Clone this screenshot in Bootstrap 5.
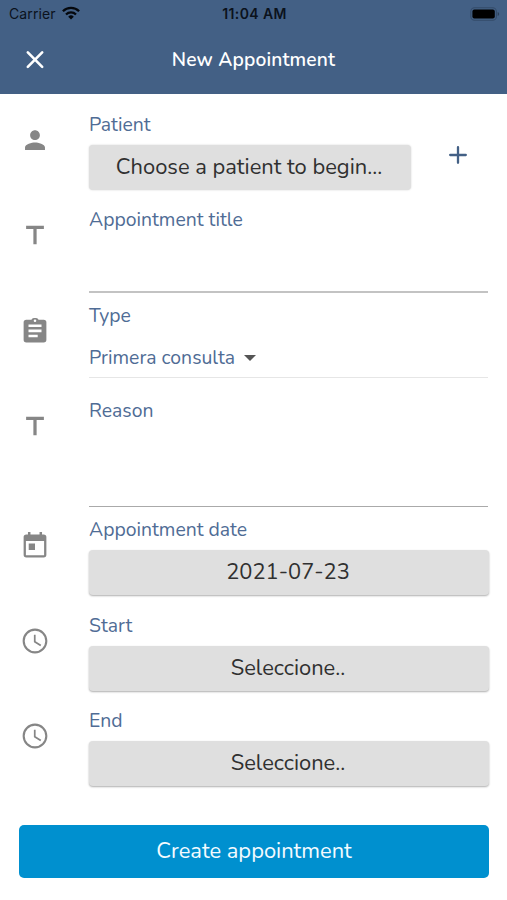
<!DOCTYPE html>
<html lang="en">
<head>
<meta charset="utf-8">
<meta name="viewport" content="width=device-width, initial-scale=1">
<title>New Appointment</title>
<link href="https://cdn.jsdelivr.net/npm/bootstrap@5.3.0/dist/css/bootstrap.min.css" rel="stylesheet">
<style>
body{font-family:Nunito,Lato,"Noto Sans",sans-serif;color:#333;background:#fff;width:507px;height:900px;overflow:hidden}
svg{display:block;flex:none}
.app-top{background:#436085;height:94px}
.status{height:28px;font:14px/28px Inter,"Liberation Sans",sans-serif;letter-spacing:.1px;color:#0b121c;padding:0 7px 0 9px}
.status .clock{font-weight:600;font-size:14px;letter-spacing:.4px}
.status>*{flex:1 1 0}
.wifi{margin:-2px 0 0 6px}
.title-bar{height:64px;padding:0 25px}
.title-bar h1{font-size:19.2px;font-weight:600;letter-spacing:.15px;color:#fff;line-height:24px;padding-right:20px}
.form-area{padding:14px 18px 0 22px}
.field{height:95.4px}
.field.tall{height:119.3px}
.glyph{width:67px;padding-top:19px;color:#868686}
.caption{font-size:19.4px;line-height:33px;height:37px;color:#4f6c95;margin:0}
.pick{background:#dfdfdf;color:#303030;font-size:21.9px;line-height:43.4px;height:45px;padding:0 2px 0 0;border:0;border-radius:4px;box-shadow:0 1px 2px rgba(0,0,0,.32)}
.pick.flat{width:322px;box-shadow:0 0 2px rgba(0,0,0,.18)}
.pick:hover{background:#dfdfdf}
.plus{color:#436085;margin:1px 22px 0 0}
.rule{width:399px;border:0;border-bottom:2px solid #c3c3c3;border-radius:0;padding:0;height:52.5px;background:none}
.rule.area{height:76px;border-bottom:1.5px solid #aaa;resize:none}
.choice{width:399px;height:42px;border-bottom:1px solid #e6e6e6;font-size:19.4px;line-height:38px;padding-top:3px;color:#4f6c95}
.arrow{border:6px solid transparent;border-top-color:#555;border-bottom:0;margin-left:9px}
.create{background:#0090cf;color:#f4fbff;font-size:21.9px;height:53px;line-height:51px;padding:0;border:0;border-radius:5px;margin:25px 18px 0 19px;width:470px}
</style>
</head>
<body>
<svg width="0" height="0" class="position-absolute">
<symbol id="t" viewBox="0 0 24 24"><path d="M3.800 3.500v3h6.700v14h3v-14h6.700v-3z"/></symbol>
<symbol id="clock" viewBox="0 0 24 24"><path d="M11.99 2C6.47 2 2 6.48 2 12s4.47 10 9.99 10C17.52 22 22 17.52 22 12S17.52 2 11.99 2zM12 20.300a8.300 8.300 0 1 1 0-16.600 8.300 8.300 0 0 1 0 16.600z"/><path d="M12.500 7H11.100v6l5.200 3.200.75-1.200-4.550-2.700z"/></symbol>
</svg>
<header class="app-top">
<div class="status d-flex align-items-center">
<div class="d-flex align-items-center"><span>Carrier</span>
<svg class="wifi" width="18" height="14" viewBox="0 0 18 14"><g fill="none" stroke="#05080d" stroke-width="2.300"><path d="M.9 5.300a11.500 11.500 0 0 1 16.200 0"/><path d="M4 8.500a7.100 7.100 0 0 1 10 0"/></g><path d="M9 13.500l-2.800-2.800a4 4 0 0 1 5.600 0z" fill="#05080d"/></svg></div>
<div class="clock text-center">11:04 AM</div>
<div class="d-flex justify-content-end"><svg width="30" height="14" viewBox="0 0 30 14"><rect x=".8" y=".8" width="25.600" height="12.400" rx="3.800" fill="none" stroke="#344b69" stroke-width="1.100"/><rect x="2.400" y="2.400" width="22.400" height="9.200" rx="2" fill="#000"/><path d="M27.700 5v4q1.500-.6 1.500-2t-1.500-2z" fill="#2c405a"/></svg></div>
</div>
<div class="title-bar d-flex align-items-center">
<svg width="20" height="20" viewBox="0 0 20 20" stroke="#fff" stroke-width="2.600" stroke-linecap="round"><path d="M2.800 2.400l14.400 14.400M17.200 2.400L2.800 16.800"/></svg>
<h1 class="flex-fill text-center m-0">New Appointment</h1>
</div>
</header>
<main>
<div class="form-area">
<section class="field d-flex"><div class="glyph"><svg width="26" height="26" viewBox="0 0 24 24" fill="currentColor"><path d="M12 12c2.500 0 4.500-2 4.500-4.500S14.500 3 12 3 7.500 5 7.500 7.500 9.500 12 12 12zm0 2.200c-3 0-9.200 1.500-9.200 4.500V21.300h18.400v-2.600c0-3-6.200-4.500-9.200-4.500z"/></svg></div>
<div class="flex-fill"><p class="caption">Patient</p><div class="d-flex justify-content-between"><button class="btn pick flat">Choose a patient to begin...</button><svg class="plus" width="18" height="18" viewBox="0 0 18 18" stroke="currentColor" stroke-width="2.300" stroke-linecap="round"><path d="M9 1.200v15.600M1.200 9h15.600"/></svg></div></div></section>
<section class="field d-flex"><div class="glyph"><svg width="26" height="26" fill="currentColor"><use href="#t"/></svg></div>
<div class="flex-fill"><p class="caption">Appointment title</p><input class="form-control rule" aria-label="Appointment title"></div></section>
<section class="field d-flex"><div class="glyph"><svg width="26" height="26" viewBox="0 1 24 24" fill="currentColor" fill-rule="evenodd"><path d="M19.500 2.500h-4.300C14.800 1.600 13.500.9 12 .9s-2.800.7-3.200 1.600H4A2.500 2.500 0 0 0 1.500 5v16A2.500 2.500 0 0 0 4 23.500h16a2.500 2.500 0 0 0 2.500-2.500V5A2.500 2.500 0 0 0 20 2.500zM12 2.300a1.200 1.200 0 1 1 0 2.400 1.200 1.200 0 0 1 0-2.400zM6 7h12v2.400H6zm0 4.700h12v2.400H6zm0 4.700h8.500v2.400H6z"/></svg></div>
<div class="flex-fill"><p class="caption">Type</p><div class="choice d-flex align-items-center"><span>Primera consulta</span><span class="arrow"></span></div></div></section>
<section class="field tall d-flex"><div class="glyph"><svg width="26" height="26" fill="currentColor"><use href="#t"/></svg></div>
<div class="flex-fill"><p class="caption">Reason</p><textarea class="form-control rule area" aria-label="Reason"></textarea></div></section>
<section class="field d-flex"><div class="glyph"><svg width="26" height="26" viewBox="0 0 24 24" fill="currentColor" fill-rule="evenodd"><path d="M20 2.200h-1.500V0h-2.300v2.200H7.800V0H5.500v2.200H4A2.500 2.500 0 0 0 1.500 4.700V21A2.500 2.500 0 0 0 4 23.500h16a2.500 2.500 0 0 0 2.500-2.500V4.700A2.500 2.500 0 0 0 20 2.200zM3.600 8.200h16.800v13.200H3.600zM6.200 10.700h5.800v5.800H6.200z"/></svg></div>
<div class="flex-fill"><p class="caption">Appointment date</p><button class="btn pick w-100">2021-07-23</button></div></section>
<section class="field d-flex"><div class="glyph"><svg width="26" height="26" fill="currentColor" viewBox="1.500 1.500 21 21"><use href="#clock" width="24" height="24"/></svg></div>
<div class="flex-fill"><p class="caption">Start</p><button class="btn pick w-100">Seleccione..</button></div></section>
<section class="field d-flex"><div class="glyph"><svg width="26" height="26" fill="currentColor" viewBox="1.500 1.500 21 21"><use href="#clock" width="24" height="24"/></svg></div>
<div class="flex-fill"><p class="caption">End</p><button class="btn pick w-100">Seleccione..</button></div></section>
</div>
<button class="btn create">Create appointment</button>
</main>
<script src="https://cdn.jsdelivr.net/npm/bootstrap@5.3.0/dist/js/bootstrap.bundle.min.js"></script>
</body>
</html>
